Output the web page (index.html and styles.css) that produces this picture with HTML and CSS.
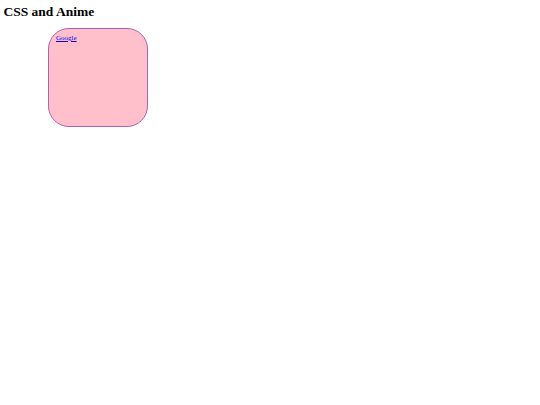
FILE: index.html
```html
<!DOCTYPE html>
<html>
<head>
<meta charset="utf-8">
<title>CSS and Anime</title>
<link rel="stylesheet" href="styles.css">
</head>
<body>
<h1 class="title">CSS and Anime</h1>
<div class="card">
<a class="link" href="#">Google</a>
</div>
</body>
</html>
```
FILE: styles.css
```css
body {
  margin: 4px 3.4px;
  font-family: "Liberation Serif", "Times New Roman", serif;
  background: #fff;
}
.title {
  margin: 0;
  font-size: 13.5px;
  font-weight: bold;
  line-height: 15.5px;
}
.card {
  margin: 8.5px 0 0 44.6px;
  width: 100px;
  height: 99px;
  background: #ffc0cb;
  border: 1px solid #a864b4;
  border-radius: 21px;
  padding: 5px 7px;
  box-sizing: border-box;
  font-size: 7px;
  line-height: 8px;
}
.link {
  color: #0000ee;
  text-decoration: underline;
}
```
